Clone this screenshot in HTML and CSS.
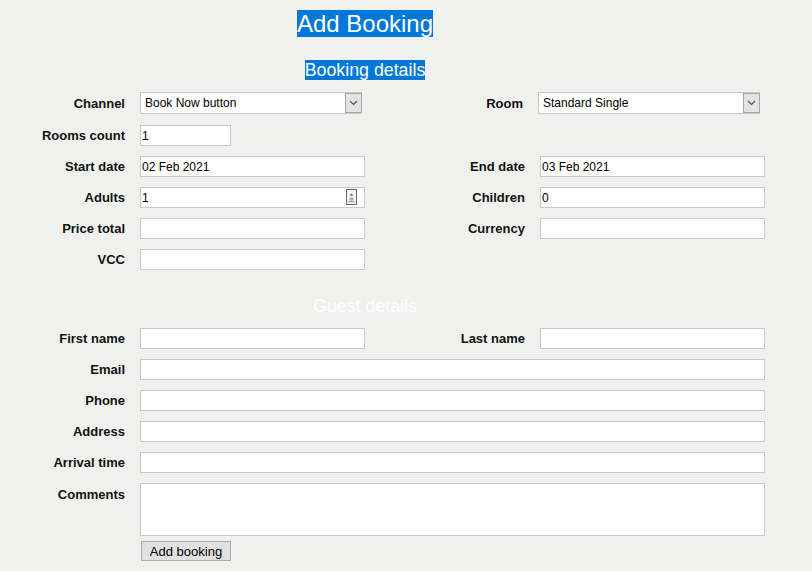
FILE: index.html
```html
<!DOCTYPE html>
<html lang="en">
<head>
    <meta charset="UTF-8">
    <meta name="viewport" content="width=device-width, initial-scale=1.0">
    <title>Add Booking</title>
    <link rel="stylesheet" href="styles.css">
</head>
<body>

    <div class="page">
        <h1 class="heading"><span class="selected">Add Booking</span></h1>

        <!-- Booking details -->
        <h2 class="heading sub"><span class="selected">Booking details</span></h2>
        <div class="form-grid">
            <label>Channel</label>
            <div class="field select-wrap">
                <select class="select">
                    <option>Book Now button</option>
                </select>
                <span class="select-arrow">
                    <svg width="9" height="6" viewBox="0 0 9 6"><path d="M1 1 L4.5 4.5 L8 1" fill="none" stroke="#555" stroke-width="1.2"/></svg>
                </span>
            </div>
            <label class="nudge">Room</label>
            <div class="field select-wrap nudge">
                <select class="select">
                    <option>Standard Single</option>
                </select>
                <span class="select-arrow">
                    <svg width="9" height="6" viewBox="0 0 9 6"><path d="M1 1 L4.5 4.5 L8 1" fill="none" stroke="#555" stroke-width="1.2"/></svg>
                </span>
            </div>

            <label>Rooms count</label>
            <div class="field"><input class="input short" type="text" value="1"></div>
            <div></div>
            <div></div>

            <label>Start date</label>
            <div class="field"><input class="input" type="text" value="02 Feb 2021"></div>
            <label>End date</label>
            <div class="field"><input class="input" type="text" value="03 Feb 2021"></div>

            <label>Adults</label>
            <div class="field">
                <input class="input" type="text" value="1">
                <span class="spinner">
                    <svg width="11" height="16" viewBox="0 0 11 16">
                        <rect x="0.5" y="0.5" width="10" height="15" fill="#f4f4f4" stroke="#666"/>
                        <path d="M5.5 4 L7.5 7 L3.5 7 Z" fill="#888"/>
                        <rect x="3.5" y="8.5" width="4" height="3" fill="#aaa"/>
                        <rect x="2.5" y="12" width="6" height="1.2" fill="#999"/>
                    </svg>
                </span>
            </div>
            <label>Children</label>
            <div class="field"><input class="input" type="text" value="0"></div>

            <label>Price total</label>
            <div class="field"><input class="input" type="text"></div>
            <label>Currency</label>
            <div class="field"><input class="input" type="text"></div>

            <label>VCC</label>
            <div class="field"><input class="input" type="text"></div>
        </div>

        <!-- Guest details -->
        <h2 class="heading sub guest">Guest details</h2>
        <div class="form-grid">
            <label>First name</label>
            <div class="field"><input class="input" type="text"></div>
            <label>Last name</label>
            <div class="field"><input class="input" type="text"></div>

            <label>Email</label>
            <div class="field wide"><input class="input" type="text"></div>

            <label>Phone</label>
            <div class="field wide"><input class="input" type="text"></div>

            <label>Address</label>
            <div class="field wide"><input class="input" type="text"></div>

            <label>Arrival time</label>
            <div class="field wide"><input class="input" type="text"></div>

            <label class="top">Comments</label>
            <div class="field wide">
                <textarea class="textarea"></textarea>
                <button class="submit-btn">Add booking</button>
            </div>
        </div>
    </div>

</body>
</html>
```

FILE: styles.css
```css
/* Basic Styles */
body {
    font-family: "Liberation Sans", Arial, sans-serif;
    margin: 0;
    padding: 0;
    background-color: #f0f1ef;
    color: #111;
}

.page {
    width: 765px;
    padding-top: 10px;
}

/* Headings */
.heading {
    width: 730px;
    margin: 0;
    text-align: center;
    font-weight: normal;
    font-size: 24px;
    color: #fff;
}

.heading.sub {
    font-size: 17.8px;
    margin-top: 22px;
    margin-bottom: 11px;
}

.heading.guest {
    margin-top: 26px;
    margin-bottom: 11px;
}

.selected {
    background-color: #0078d7;
    color: #fff;
}

/* Form grid */
.form-grid {
    display: grid;
    grid-template-columns: 125px 225px 145px 225px;
    column-gap: 15px;
    row-gap: 10px;
    align-items: center;
}

.form-grid label {
    text-align: right;
    font-weight: bold;
    font-size: 13px;
}

.form-grid label.top {
    align-self: start;
    padding-top: 4px;
}

.form-grid label.nudge {
    margin-right: 2px;
}

.field {
    position: relative;
    display: flex;
    flex-direction: column;
    align-items: flex-start;
}

.field.nudge {
    margin-left: -2px;
}

.field.wide {
    grid-column: 2 / 5;
}

.select-wrap {
    padding-bottom: 1px;
}

.input {
    box-sizing: border-box;
    width: 225px;
    height: 21px;
    margin: 0;
    padding: 0 1px;
    border: 1px solid #c9c9c9;
    background: #fff;
    font-family: "Liberation Sans", Arial, sans-serif;
    font-size: 12px;
    color: #000;
    outline: none;
}

.field.wide .input {
    width: 100%;
}

.input.short {
    width: 91px;
}

.spinner {
    position: absolute;
    right: 8px;
    top: 2px;
    height: 16px;
    line-height: 0;
}

/* Select */
.select {
    box-sizing: border-box;
    width: 222px;
    height: 22px;
    margin: 0;
    padding: 0 0 0 4px;
    border: 1px solid #c9c9c9;
    background: #fff;
    font-family: "Liberation Sans", Arial, sans-serif;
    font-size: 12px;
    color: #000;
    appearance: none;
    -webkit-appearance: none;
    outline: none;
}

.select-arrow {
    position: absolute;
    left: 205px;
    top: 1px;
    box-sizing: border-box;
    width: 17px;
    height: 20px;
    border: 1px solid #a8a8a8;
    background: #e3e3e3;
    display: flex;
    align-items: center;
    justify-content: center;
    pointer-events: none;
}

/* Comments and button */
.textarea {
    box-sizing: border-box;
    width: 100%;
    height: 53px;
    margin: 0;
    border: 1px solid #c9c9c9;
    background: #fff;
    resize: none;
    outline: none;
}

.submit-btn {
    margin: 5px 0 0 1px;
    width: 90px;
    height: 20px;
    padding: 0;
    border: 1px solid #adadad;
    background-color: #e1e1e1;
    font-family: "Liberation Sans", Arial, sans-serif;
    font-size: 13px;
    color: #000;
    cursor: pointer;
}

.submit-btn:hover {
    background-color: #e5f1fb;
}
```
